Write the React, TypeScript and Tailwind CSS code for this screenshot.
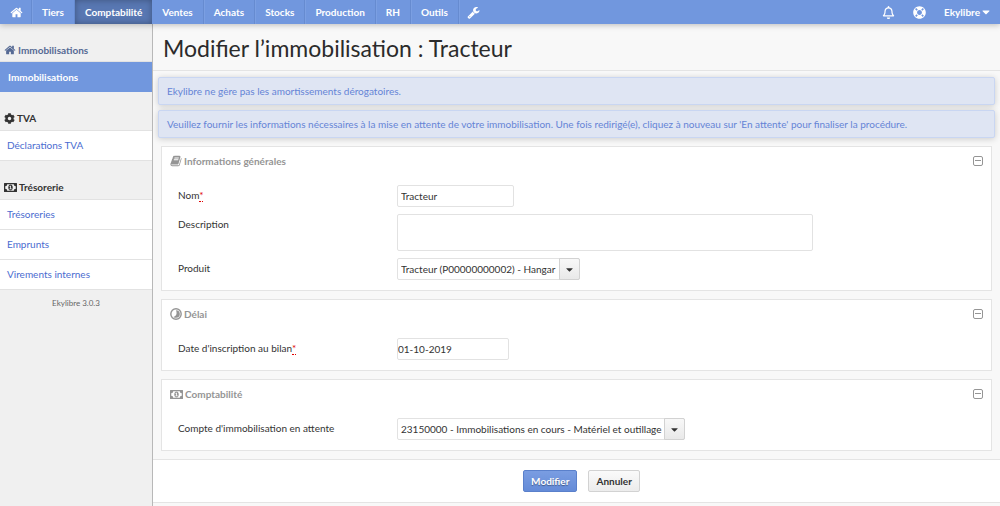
import type { ReactNode, SelectHTMLAttributes } from "react";
import { FaCog, FaRegBell, FaCaretDown, FaLifeRing } from "react-icons/fa";

type IconProps = { className?: string };

function HomeIcon({ className }: IconProps) {
  return (
    <svg viewBox="0 0 1792 1792" fill="currentColor" className={className} aria-hidden="true">
      <path d="M1472 992v480q0 26-19 45t-45 19h-384v-384h-256v384h-384q-26 0-45-19t-19-45v-480q0-1 .5-3t.5-3l575-474 575 474q1 2 1 6zm223-69l-62 74q-8 9-21 11h-3q-13 0-21-7l-692-577-692 577q-12 8-24 7-13-2-21-11l-62-74q-8-10-7-23.5t11-21.5l719-599q32-26 76-26t76 26l244 204v-195q0-14 9-23t23-9h192q14 0 23 9t9 23v408l219 182q10 8 11 21.5t-7 23.5z" />
    </svg>
  );
}

function WrenchIcon({ className }: IconProps) {
  return (
    <svg viewBox="0 0 1792 1792" fill="currentColor" className={className} aria-hidden="true">
      <path d="M448 1472q0-26-19-45t-45-19-45 19-19 45 19 45 45 19 45-19 19-45zm644-420l-682 682q-37 37-90 37-52 0-91-37l-106-108q-38-36-38-90 0-53 38-91l681-681q39 98 114.5 173.5t173.5 114.5zm634-435q0 39-23 106-47 134-164.5 217.5t-258.5 83.5q-185 0-316.5-131.5t-131.5-316.5 131.5-316.5 316.5-131.5q58 0 121.5 16.5t107.5 46.5q16 11 16 28t-16 28l-293 169v224l193 107q5-3 79-48.5t135.5-81 70.5-35.5q15 0 23.5 10t8.5 25z" />
    </svg>
  );
}

function BookIcon({ className }: IconProps) {
  return (
    <svg viewBox="0 0 1792 1792" fill="currentColor" className={className} aria-hidden="true">
      <path d="M1703 478q40 57 18 129l-275 906q-19 64-76.5 107.5t-122.5 43.5h-923q-77 0-148.5-53.5t-99.5-131.5q-24-67-2-127 0-4 3-27t4-37q1-8-3-21.5t-3-19.5q2-11 8-21t16.5-23.5 16.5-23.5q23-38 45-91.5t30-91.5q3-10 .5-30t-.5-28q3-11 17-28t17-23q21-36 42-92t25-90q1-9-2.500-32t.5-28q4-13 22-30.5t22-22.5q19-26 42.5-84.5t27.5-96.5q1-8-3-25.5t-2-26.5q2-8 9-18t18-23 17-21q8-12 16.5-30.5t15-35 16-36 19.5-32 26.5-23.5 36-11.5 47.5 5.5l-1 3q38-9 51-9h761q74 0 114 56t18 130l-274 906q-36 119-71.5 153.5t-128.5 34.5h-869q-27 0-38 15-11 16-1 43 24 70 144 70h923q29 0 56-15.5t35-41.5l300-987q7-22 5-57 38 15 59 43zm-1064 2q-4 13 2 22.5t20 9.5h608q13 0 25.5-9.5t16.5-22.5l21-64q4-13-2-22.5t-20-9.5h-608q-13 0-25.5 9.5t-16.5 22.5zm-83 256q-4 13 2 22.5t20 9.5h608q13 0 25.5-9.5t16.5-22.5l21-64q4-13-2-22.5t-20-9.5h-608q-13 0-25.5 9.5t-16.5 22.5z" />
    </svg>
  );
}

function BanknoteIcon({ className }: IconProps) {
  return (
    <svg viewBox="0 0 26 18" fill="currentColor" className={className} aria-hidden="true">
      <path
        fillRule="evenodd"
        d="M1 0h24a1 1 0 0 1 1 1v16a1 1 0 0 1-1 1H1a1 1 0 0 1-1-1V1a1 1 0 0 1 1-1zM6.500 2.500A4 4 0 0 1 2.500 6.500v5A4 4 0 0 1 6.500 15.500h13a4 4 0 0 1 4-4v-5A4 4 0 0 1 19.500 2.500z"
      />
      <path
        fillRule="evenodd"
        d="M13 3c3 0 4.500 3 4.500 6S16 15 13 15s-4.500-3-4.500-6S10 3 13 3zM12.500 5.500L10.700 7l.9 1 .7-.5V11h-1.500v1.300h4.600V11h-1.500V5.500z"
      />
    </svg>
  );
}

function MoonPhaseIcon({ className }: IconProps) {
  return (
    <svg viewBox="0 0 22 22" className={className} aria-hidden="true">
      <circle cx="11" cy="11" r="9.500" fill="none" stroke="currentColor" strokeWidth="2.600" />
      <path d="M11 4a7 7 0 0 1 0 14c-1.800 0-3.400-.6-4.700-1.700C10.500 15 12.500 12 12 8.500 11.800 6.800 11.500 5 11 4z" fill="currentColor" />
    </svg>
  );
}

function CollapseIcon({ className }: IconProps) {
  return (
    <svg viewBox="0 0 10 10" fill="none" stroke="currentColor" className={className} aria-hidden="true">
      <rect x="0.500" y="0.500" width="9" height="9" rx="1.500" />
      <path d="M2 4.500h6" />
    </svg>
  );
}

const navItems = ["Ventes", "Achats", "Stocks", "Production", "RH", "Outils"];
const navBase = "flex items-center border-r border-r-[#668bd0] pl-[10px] text-white shadow-[1px_0_0_#7b9fe2]";
const sideTitle = "flex items-center border-b border-[#e2e2e2] pl-1 font-bold";

function SideGroup({ icon, title, links }: { icon: ReactNode; title: string; links: string[] }) {
  return (
    <section>
      <h2 className={`${sideTitle} h-[39px] gap-[2px] pt-[15px] text-[#333]`}>
        {icon}
        {title}
      </h2>
      <ul>
        {links.map((link) => (
          <li key={link} className="border-b border-[#e2e2e2] bg-white">
            <a href="#" className="flex h-[29px] items-center px-[7px] text-[#4a6cd0]">
              {link}
            </a>
          </li>
        ))}
      </ul>
    </section>
  );
}

function Notice({ children }: { children: ReactNode }) {
  return (
    <p className="rounded-[2px] border border-[#c9d6f2] bg-[#dfe5f3] px-2 py-[5px] leading-4 text-[#6584d6] shadow-[0_1px_6px_#0000002e]">
      {children}
    </p>
  );
}

function Panel({ icon, title, children }: { icon: ReactNode; title: string; children: ReactNode }) {
  return (
    <section className="border border-[#e4e4e4] bg-white px-2 pb-[10px]">
      <header className="flex h-7 items-center justify-between text-[#959595]">
        <h2 className="flex items-center gap-[2px] font-bold">
          {icon}
          {title}
        </h2>
        <button type="button" aria-label={`Replier ${title}`}>
          <CollapseIcon className="size-[10px]" />
        </button>
      </header>
      <div className="flex flex-col gap-[7px] pt-[10px] pl-2">{children}</div>
    </section>
  );
}

function Field({ id, label, required, children }: { id: string; label: string; required?: boolean; children: ReactNode }) {
  return (
    <div className="flex items-start">
      <label htmlFor={id} className="w-[219px] shrink-0 pt-[2px] leading-4">
        {label}
        {required && (
          <abbr title="requis" className="border-b border-dotted border-[#e00000] text-[#e00000] [text-decoration:none]">
            *
          </abbr>
        )}
      </label>
      {children}
    </div>
  );
}

const control = "rounded-[2px] border border-[#e2e2e2] bg-white text-[#333]";

function DropDown({ className, children, ...rest }: SelectHTMLAttributes<HTMLSelectElement>) {
  return (
    <div className={`relative ${className ?? ""}`}>
      <select {...rest} className={`${control} h-[22px] w-full appearance-none pr-5 pl-[3px]`}>
        {children}
      </select>
      <span className="pointer-events-none absolute inset-y-0 right-0 flex w-[21px] items-center justify-center rounded-r-[2px] border border-[#d2d2d2] bg-linear-to-b from-[#f8f8f8] to-[#e9e9e9] text-[#333]">
        <FaCaretDown className="size-[11px]" />
      </span>
    </div>
  );
}

export default function App() {
  return (
    <div className="flex min-h-screen flex-col bg-[#f8f8f8] font-['Lato',sans-serif] text-[10px] text-[#333]">
      <header className="z-10 flex h-6 justify-between bg-[#7197de] font-bold shadow-[0_1px_6px_#00000040]">
        <nav className="flex">
          <a href="#" aria-label="Accueil" className={`${navBase} pr-2`}>
            <HomeIcon className="size-[13px]" />
          </a>
          <a href="#" className={`${navBase} pr-[10px]`}>
            Tiers
          </a>
          <a
            href="#"
            aria-current="page"
            className="flex items-center bg-[#5877b2] px-[10px] text-white shadow-[inset_0_0_6px_#00000050]"
          >
            Comptabilité
          </a>
          {navItems.map((item) => (
            <a key={item} href="#" className={`${navBase} pr-[10px]`}>
              {item}
            </a>
          ))}
          <a href="#" aria-label="Paramètres" className="flex items-center px-2 text-white">
            <WrenchIcon className="size-[13px]" />
          </a>
        </nav>
        <div className="flex items-center gap-[18px] pr-2 text-white">
          <button type="button" aria-label="Notifications">
            <FaRegBell className="size-[13px]" />
          </button>
          <button type="button" aria-label="Aide">
            <FaLifeRing className="size-[13px]" />
          </button>
          <button type="button" className="flex items-center">
            Ekylibre
            <FaCaretDown className="size-3" />
          </button>
        </div>
      </header>

      <div className="flex grow">
        <aside className="w-[153px] shrink-0 border-r border-[#b8b8b8] bg-[#f0f0f0]">
          <h2 className={`${sideTitle} h-[38px] gap-[2px] pt-[15px] text-[#566a94]`}>
            <HomeIcon className="size-3" />
            Immobilisations
          </h2>
          <a href="#" aria-current="page" className="flex h-[30px] items-center bg-[#7197de] px-2 font-bold text-white">
            Immobilisations
          </a>
          <SideGroup icon={<FaCog className="size-[11px]" />} title="TVA" links={["Déclarations TVA"]} />
          <SideGroup
            icon={<BanknoteIcon className="h-[9px] w-[13px]" />}
            title="Trésorerie"
            links={["Trésoreries", "Emprunts", "Virements internes"]}
          />
          <p className="pt-[7px] text-center text-[8px] leading-3 text-[#666]">Ekylibre 3.0.3</p>
        </aside>

        <main className="min-w-0 grow">
          <h1 className="border-b border-[#e4e4e4] px-[10px] pt-2 pb-[6px] text-[23px] leading-8 text-[#2b2b2b]">
            Modifier l’immobilisation : Tracteur
          </h1>
          <div className="flex flex-col gap-[5px] px-[5px] pt-[6px]">
            <Notice>Ekylibre ne gère pas les amortissements dérogatoires.</Notice>
            <Notice>
              Veuillez fournir les informations nécessaires à la mise en attente de votre immobilisation. Une fois
              redirigé(e), cliquez à nouveau sur 'En attente' pour finaliser la procédure.
            </Notice>
          </div>

          <form>
            <div className="flex flex-col gap-2 p-2">
              <Panel icon={<BookIcon className="size-3" />} title="Informations générales">
                <Field id="name" label="Nom" required>
                  <input id="name" type="text" defaultValue="Tracteur" className={`${control} h-[22px] w-[117px] px-[3px]`} />
                </Field>
                <Field id="description" label="Description">
                  <textarea id="description" className={`${control} block h-[37px] w-[416px] resize-none px-[3px]`} />
                </Field>
                <Field id="product" label="Produit">
                  <DropDown id="product" className="w-[183px]">
                    <option>Tracteur (P00000000002) - Hangar</option>
                  </DropDown>
                </Field>
              </Panel>
              <Panel icon={<MoonPhaseIcon className="size-3" />} title="Délai">
                <Field id="date" label="Date d'inscription au bilan" required>
                  <input id="date" type="text" defaultValue="01-10-2019" className={`${control} h-[22px] w-28`} />
                </Field>
              </Panel>
              <Panel icon={<BanknoteIcon className="h-[9px] w-[13px]" />} title="Comptabilité">
                <Field id="account" label="Compte d'immobilisation en attente">
                  <DropDown id="account" className="w-72">
                    <option>23150000 - Immobilisations en cours - Matériel et outillage</option>
                  </DropDown>
                </Field>
              </Panel>
            </div>
            <footer className="flex justify-center gap-[11px] border-y border-[#e4e4e4] bg-white py-[10px] pl-[10px] font-bold">
              <button
                type="submit"
                className="h-[22px] rounded-[2px] border border-[#5a80cb] bg-linear-to-b from-[#7a9de2] to-[#648bd8] px-[7px] text-white [text-shadow:0_1px_1px_#00000060]"
              >
                Modifier
              </button>
              <button
                type="button"
                className="h-[22px] rounded-[2px] border border-[#d2d2d2] bg-linear-to-b from-[#fafafa] to-[#ececec] px-[7px] text-[#333]"
              >
                Annuler
              </button>
            </footer>
          </form>
        </main>
      </div>
    </div>
  );
}
